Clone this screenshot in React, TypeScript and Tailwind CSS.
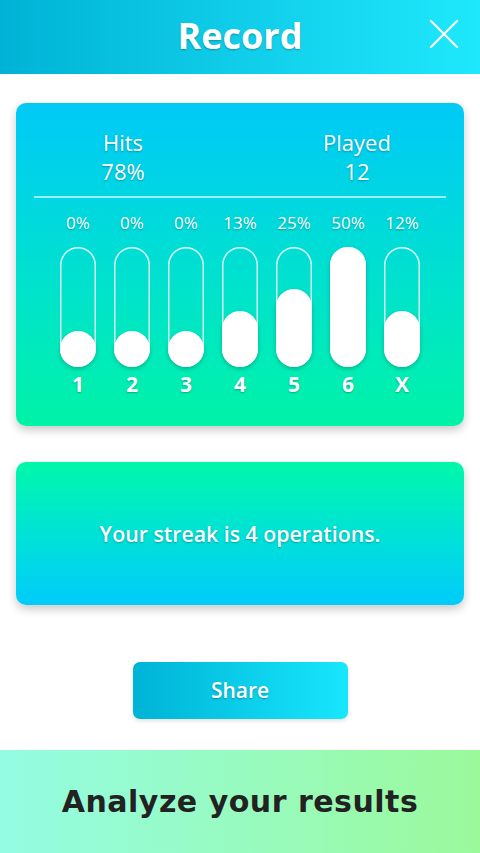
import React from "react";

const bars = [
  { pct: "0%", label: "1", h: 36 },
  { pct: "0%", label: "2", h: 36 },
  { pct: "0%", label: "3", h: 36 },
  { pct: "13%", label: "4", h: 56 },
  { pct: "25%", label: "5", h: 78 },
  { pct: "50%", label: "6", h: 120 },
  { pct: "12%", label: "X", h: 56 },
];

const shadowText = "[text-shadow:0_1px_2px_rgba(0,0,0,0.28)]";

export default function App() {
  return (
    <div className="w-[480px] h-[853px] bg-white flex flex-col overflow-hidden font-['Open_Sans','Noto_Sans',sans-serif]">
      {/* Header */}
      <div className="h-[74px] shrink-0 relative flex items-center justify-center pb-[3px] bg-gradient-to-r from-[#00b3d6] to-[#1ee8fc]">
        <div className={`text-white font-bold text-[36px] leading-none ${shadowText}`}>Record</div>
        <svg className="absolute right-[21px] top-[19px]" width="30" height="30" viewBox="0 0 30 30">
          <path d="M2 2 L28 28 M28 2 L2 28" stroke="white" strokeWidth="2.2" strokeLinecap="round" />
        </svg>
      </div>

      {/* Stats card */}
      <div className="mx-[16px] mt-[29px] h-[323px] rounded-[10px] bg-gradient-to-b from-[#00c9f7] to-[#00f3a6] shadow-[0_4px_10px_rgba(0,0,0,0.22)] flex flex-col pt-[25px]">
        <div className={`flex text-white text-[22px] leading-[29px] ${shadowText}`}>
          <div className="w-[120px] ml-[47px] text-center">
            <div>Hits</div>
            <div>78%</div>
          </div>
          <div className="w-[120px] ml-[114px] text-center">
            <div>Played</div>
            <div>12</div>
          </div>
        </div>
        <div className="mx-[18px] mt-[10px] h-[2px] bg-white/60" />
        <div className="flex justify-center mt-[13px]">
          {bars.map((b, i) => (
            <div key={i} className="w-[54px] flex flex-col items-center">
              <div className={`text-white text-[17px] leading-[24px] ${shadowText}`}>{b.pct}</div>
              <div className="mt-[12px] w-[36px] h-[120px] rounded-full shadow-[inset_0_0_0_1.5px_rgba(255,255,255,0.85)] flex flex-col justify-end">
                <div
                  className="w-full rounded-full bg-white shadow-[0_2px_4px_rgba(0,0,0,0.22)]"
                  style={{ height: b.h }}
                />
              </div>
              <div className={`mt-[5px] text-white font-bold text-[21px] leading-[24px] ${shadowText}`}>{b.label}</div>
            </div>
          ))}
        </div>
      </div>

      {/* Streak card */}
      <div className="mx-[16px] mt-[36px] h-[143px] rounded-[10px] bg-gradient-to-b from-[#00f7a9] to-[#00cbfb] shadow-[0_4px_10px_rgba(0,0,0,0.22)] flex items-center justify-center">
        <div className={`text-white font-semibold text-[21.3px] leading-none ${shadowText}`}>
          Your streak is 4 operations.
        </div>
      </div>

      {/* Share */}
      <div className="flex justify-center mt-[57px]">
        <div className="w-[215px] h-[57px] rounded-[7px] bg-gradient-to-r from-[#00b3d6] to-[#17e7fd] shadow-[0_2px_4px_rgba(0,0,0,0.12)] flex items-center justify-center">
          <span className={`text-white font-semibold text-[21px] leading-none ${shadowText}`}>Share</span>
        </div>
      </div>

      {/* Banner */}
      <div className="mt-[31px] flex-1 bg-gradient-to-r from-[#94fce2] to-[#9bf99a] flex items-center justify-center">
        <div className="font-['DejaVu_Sans',sans-serif] font-bold text-[30px] leading-none text-[#222222] tracking-[0.5px]">
          Analyze your results
        </div>
      </div>
    </div>
  );
}
